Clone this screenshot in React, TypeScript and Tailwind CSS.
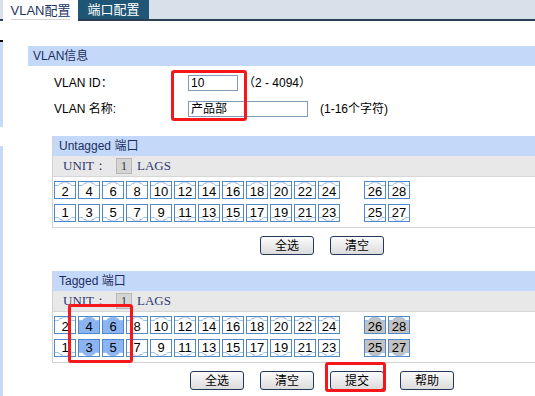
import React from 'react'

type Fill = 'none' | 'blue' | 'gray'

const evenPorts = [2, 4, 6, 8, 10, 12, 14, 16, 18, 20, 22, 24]
const oddPorts = [1, 3, 5, 7, 9, 11, 13, 15, 17, 19, 21, 23]

// RJ45 outline, notch on top (even row) or bottom (odd row)
const topShape = '1,4.5 4.5,4.5 6,2.5 8,2.5 8,1 14,1 14,2.5 16,2.5 17.5,4.5 21,4.5 21,17 1,17'
const topLine = '1,4.5 4.5,4.5 6,2.5 8,2.5 8,1 14,1 14,2.5 16,2.5 17.5,4.5 21,4.5'
const bottomShape = '1,13.5 4.5,13.5 6,15.5 8,15.5 8,17 14,17 14,15.5 16,15.5 17.5,13.5 21,13.5 21,1 1,1'
const bottomLine = '1,13.5 4.5,13.5 6,15.5 8,15.5 8,17 14,17 14,15.5 16,15.5 17.5,13.5 21,13.5'

function Port({ n, top, fill = 'none' }: { n: number; top: boolean; fill?: Fill }) {
  const bg = fill === 'blue' ? '#8cb4f2' : fill === 'gray' ? '#c2c2c2' : '#ffffff'
  return (
    <div className="relative w-[22px] h-[18px] flex items-center justify-center">
      <svg className="absolute inset-0" width="22" height="18" viewBox="0 0 22 18">
        <rect x="0" y="0" width="22" height="18" fill="#ffffff" />
        <polygon points={top ? topShape : bottomShape} fill={bg} />
        <polyline points={top ? topLine : bottomLine} fill="none" stroke="#9fc0e8" strokeWidth="1" />
        <rect x="0.5" y="0.5" width="21" height="17" fill="none" stroke="#4f88cc" />
      </svg>
      <span className={`relative text-[13px] leading-none text-black ${top ? 'pt-[3px]' : 'pb-[2px]'}`}>{n}</span>
    </div>
  )
}

function PortGrid({ tagged }: { tagged: boolean }) {
  const fillOf = (n: number): Fill => {
    if (!tagged) return 'none'
    if ([3, 4, 5, 6].includes(n)) return 'blue'
    if (n >= 25) return 'gray'
    return 'none'
  }
  return (
    <div className="pt-[4px] pb-[5px] pl-[1px] flex flex-col gap-[5px]">
      <div className="flex gap-[2px]">
        {evenPorts.map((n) => (
          <Port key={n} n={n} top fill={fillOf(n)} />
        ))}
        <div className="ml-[22px] flex gap-[2px]">
          <Port n={26} top fill={fillOf(26)} />
          <Port n={28} top fill={fillOf(28)} />
        </div>
      </div>
      <div className="flex gap-[2px]">
        {oddPorts.map((n) => (
          <Port key={n} n={n} top={false} fill={fillOf(n)} />
        ))}
        <div className="ml-[22px] flex gap-[2px]">
          <Port n={25} top={false} fill={fillOf(25)} />
          <Port n={27} top={false} fill={fillOf(27)} />
        </div>
      </div>
    </div>
  )
}

function PortSection({ title, tagged }: { title: string; tagged: boolean }) {
  return (
    <div className="ml-[24px] w-[540px] border-x border-b border-[#d2d2d2]">
      <div className="h-[20px] bg-[#c4d9fa] pl-[6px] flex items-center text-[12px] text-[#1c2e5e]">{title}</div>
      <div className="h-[21px] bg-[#e8e8e8] border-b border-[#d6d6d6] flex items-center pl-[10px] font-['Liberation_Serif',serif] text-[13px] text-[#2f3870]">
        <span className="w-[53px]">UNIT：</span>
        <span className="w-[16px] h-[16px] bg-[#d4d4d4] border border-[#b8b8b8] flex items-center justify-center text-[12px] text-[#333]">
          1
        </span>
        <span className="ml-[5px]">LAGS</span>
      </div>
      <PortGrid tagged={tagged} />
    </div>
  )
}

function Btn({ label }: { label: string }) {
  return (
    <button className="w-[54px] h-[19px] border border-[#22395a] rounded-[3px] bg-linear-to-b from-[#fbfbfb] to-[#dcdcdc] text-[12px] leading-none text-black">
      {label}
    </button>
  )
}

export default function App() {
  return (
    <div className="relative w-[535px] h-[396px] overflow-hidden bg-white font-['Liberation_Sans','Noto_Sans_CJK_SC',sans-serif]">
      {/* tab bar */}
      <div className="flex h-[21px] bg-[#d8e0ea] border-b-2 border-[#2a3e55] pl-[3px]">
        <div className="w-[75px] h-[21px] bg-white flex items-center justify-center text-[13px] text-[#1b3563] pt-[1px]">
          <span className="border-b border-[#d4d4d4] leading-[17px]">VLAN配置</span>
        </div>
        <div className="w-[71px] h-[19px] bg-[#1f5675] flex items-center justify-center text-[13px] text-white">端口配置</div>
      </div>

      <div className="flex h-[375px]">
        {/* left frame strip */}
        <div className="w-[3px] flex flex-col">
          <div className="h-[19px] bg-white" />
          <div className="h-[2px] bg-black" />
          <div className="h-[85px] bg-[#c6d9f6]" />
          <div className="h-[19px] bg-white" />
          <div className="flex-1 bg-[#c6d9f6]" />
        </div>

        <div className="flex-1 min-w-0 pl-[25px]">
          <div className="mt-[25px] h-[20px] bg-[#c4d9fa] pl-[5px] flex items-center text-[12px] text-[#1c2e5e]">VLAN信息</div>

          <div className="mt-[4px] h-[26px] pl-[26px] flex items-center text-[12px] text-black">
            <span className="w-[134px]">VLAN ID：</span>
            <div className="w-[50px] h-[16px] border border-[#7f9db9] pl-[2px] flex items-center">10</div>
            <span className="ml-[5px]">（2 - 4094）</span>
          </div>
          <div className="h-[26px] pl-[26px] flex items-center text-[12px] text-black">
            <span className="w-[134px]">VLAN 名称:</span>
            <div className="w-[120px] h-[16px] border border-[#7f9db9] pl-[2px] flex items-center">产品部</div>
            <span className="ml-[12px]">(1-16个字符)</span>
          </div>

          <div className="mt-[14px]">
            <PortSection title="Untagged 端口" tagged={false} />
          </div>
          <div className="mt-[8px] ml-[24px] w-[540px] flex justify-center gap-[16px]">
            <Btn label="全选" />
            <Btn label="清空" />
          </div>

          <div className="mt-[16px]">
            <PortSection title="Tagged 端口" tagged />
          </div>
          <div className="mt-[8px] ml-[24px] w-[540px] flex justify-center gap-[16px]">
            <Btn label="全选" />
            <Btn label="清空" />
            <Btn label="提交" />
            <Btn label="帮助" />
          </div>
        </div>
      </div>

      {/* red annotation boxes */}
      <div className="absolute left-[171px] top-[70px] w-[76px] h-[51px] border-[3px] border-[#f5171a] rounded-[3px]" />
      <div className="absolute left-[68px] top-[304px] w-[65px] h-[59px] border-[3px] border-[#f5171a] rounded-[3px]" />
      <div className="absolute left-[325px] top-[362px] w-[61px] h-[30px] border-[3px] border-[#f5171a] rounded-[3px]" />
    </div>
  )
}
